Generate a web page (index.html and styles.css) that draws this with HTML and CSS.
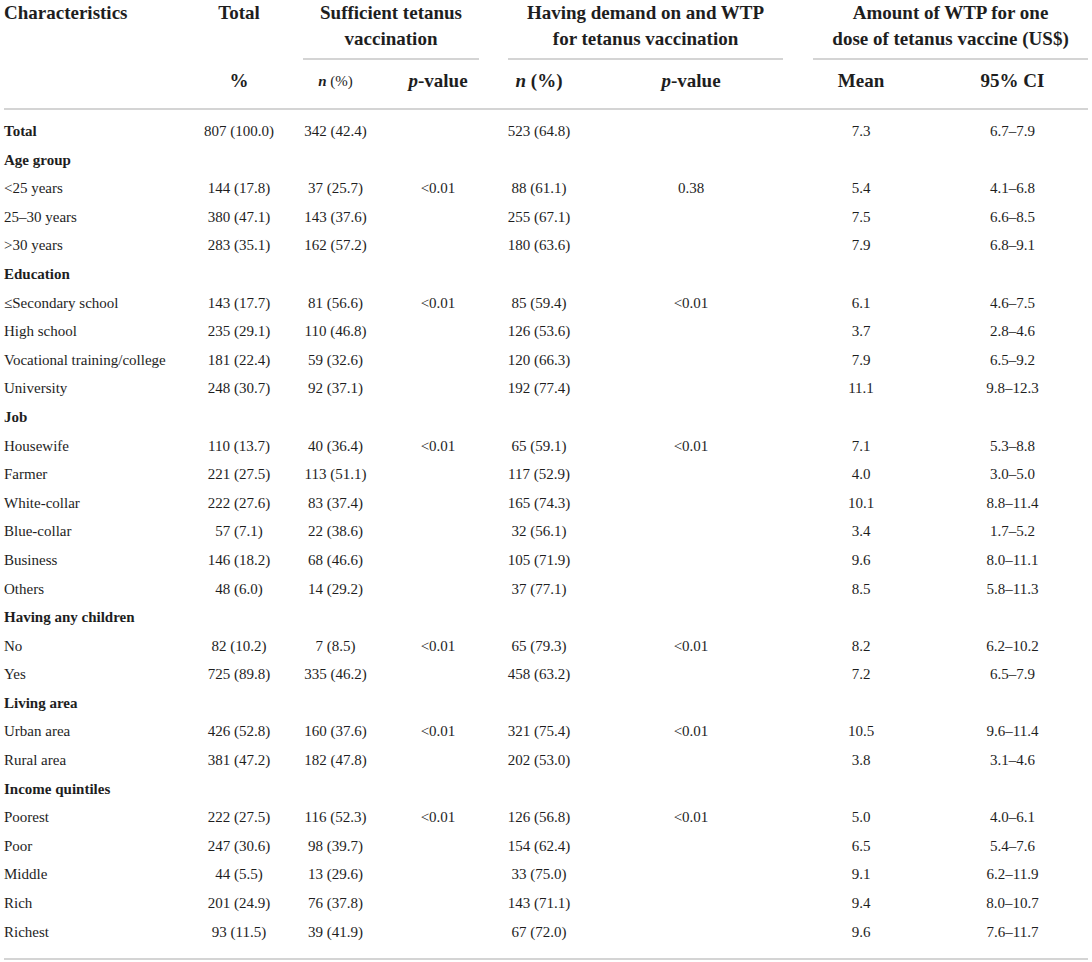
FILE: index.html
```html
<!DOCTYPE html>
<html lang="en">
<head>
  <meta charset="UTF-8" />
  <meta name="viewport" content="width=device-width, initial-scale=1.0"/>
  <title>Tetanus vaccination and WTP</title>
  <link rel="stylesheet" href="styles.css">
</head>
<body>
  <div class="container">
    <table class="wtp-table">
      <colgroup>
        <col class="c-label">
        <col class="c-total">
        <col class="c-n1">
        <col class="c-p1">
        <col class="c-n2">
        <col class="c-p2">
        <col class="c-mean">
        <col class="c-ci">
      </colgroup>
      <thead>
        <tr class="head-top">
          <th class="label">Characteristics</th>
          <th>Total</th>
          <th colspan="2"><div class="group g1">Sufficient tetanus<br>vaccination</div></th>
          <th colspan="2"><div class="group g2">Having demand on and WTP<br>for tetanus vaccination</div></th>
          <th colspan="2"><div class="group g3">Amount of WTP for one<br>dose of tetanus vaccine (US$)</div></th>
        </tr>
        <tr class="head-sub">
          <th class="label"></th>
          <th>%</th>
          <th class="small"><i>n</i> (%)</th>
          <th><i>p</i>-value</th>
          <th><i>n</i> (%)</th>
          <th><i>p</i>-value</th>
          <th>Mean</th>
          <th class="ci">95% CI</th>
        </tr>
      </thead>
      <tbody>
        <tr class="first"><td class="label section">Total</td><td>807 (100.0)</td><td>342 (42.4)</td><td></td><td>523 (64.8)</td><td></td><td>7.3</td><td class="ci">6.7–7.9</td></tr>
        <tr><td class="label section" colspan="8">Age group</td></tr>
        <tr><td class="label">&lt;25 years</td><td>144 (17.8)</td><td>37 (25.7)</td><td>&lt;0.01</td><td>88 (61.1)</td><td>0.38</td><td>5.4</td><td class="ci">4.1–6.8</td></tr>
        <tr><td class="label">25–30 years</td><td>380 (47.1)</td><td>143 (37.6)</td><td></td><td>255 (67.1)</td><td></td><td>7.5</td><td class="ci">6.6–8.5</td></tr>
        <tr><td class="label">&gt;30 years</td><td>283 (35.1)</td><td>162 (57.2)</td><td></td><td>180 (63.6)</td><td></td><td>7.9</td><td class="ci">6.8–9.1</td></tr>
        <tr><td class="label section" colspan="8">Education</td></tr>
        <tr><td class="label">≤Secondary school</td><td>143 (17.7)</td><td>81 (56.6)</td><td>&lt;0.01</td><td>85 (59.4)</td><td>&lt;0.01</td><td>6.1</td><td class="ci">4.6–7.5</td></tr>
        <tr><td class="label">High school</td><td>235 (29.1)</td><td>110 (46.8)</td><td></td><td>126 (53.6)</td><td></td><td>3.7</td><td class="ci">2.8–4.6</td></tr>
        <tr><td class="label">Vocational training/college</td><td>181 (22.4)</td><td>59 (32.6)</td><td></td><td>120 (66.3)</td><td></td><td>7.9</td><td class="ci">6.5–9.2</td></tr>
        <tr><td class="label">University</td><td>248 (30.7)</td><td>92 (37.1)</td><td></td><td>192 (77.4)</td><td></td><td>11.1</td><td class="ci">9.8–12.3</td></tr>
        <tr><td class="label section" colspan="8">Job</td></tr>
        <tr><td class="label">Housewife</td><td>110 (13.7)</td><td>40 (36.4)</td><td>&lt;0.01</td><td>65 (59.1)</td><td>&lt;0.01</td><td>7.1</td><td class="ci">5.3–8.8</td></tr>
        <tr><td class="label">Farmer</td><td>221 (27.5)</td><td>113 (51.1)</td><td></td><td>117 (52.9)</td><td></td><td>4.0</td><td class="ci">3.0–5.0</td></tr>
        <tr><td class="label">White-collar</td><td>222 (27.6)</td><td>83 (37.4)</td><td></td><td>165 (74.3)</td><td></td><td>10.1</td><td class="ci">8.8–11.4</td></tr>
        <tr><td class="label">Blue-collar</td><td>57 (7.1)</td><td>22 (38.6)</td><td></td><td>32 (56.1)</td><td></td><td>3.4</td><td class="ci">1.7–5.2</td></tr>
        <tr><td class="label">Business</td><td>146 (18.2)</td><td>68 (46.6)</td><td></td><td>105 (71.9)</td><td></td><td>9.6</td><td class="ci">8.0–11.1</td></tr>
        <tr><td class="label">Others</td><td>48 (6.0)</td><td>14 (29.2)</td><td></td><td>37 (77.1)</td><td></td><td>8.5</td><td class="ci">5.8–11.3</td></tr>
        <tr><td class="label section" colspan="8">Having any children</td></tr>
        <tr><td class="label">No</td><td>82 (10.2)</td><td>7 (8.5)</td><td>&lt;0.01</td><td>65 (79.3)</td><td>&lt;0.01</td><td>8.2</td><td class="ci">6.2–10.2</td></tr>
        <tr><td class="label">Yes</td><td>725 (89.8)</td><td>335 (46.2)</td><td></td><td>458 (63.2)</td><td></td><td>7.2</td><td class="ci">6.5–7.9</td></tr>
        <tr><td class="label section" colspan="8">Living area</td></tr>
        <tr><td class="label">Urban area</td><td>426 (52.8)</td><td>160 (37.6)</td><td>&lt;0.01</td><td>321 (75.4)</td><td>&lt;0.01</td><td>10.5</td><td class="ci">9.6–11.4</td></tr>
        <tr><td class="label">Rural area</td><td>381 (47.2)</td><td>182 (47.8)</td><td></td><td>202 (53.0)</td><td></td><td>3.8</td><td class="ci">3.1–4.6</td></tr>
        <tr><td class="label section" colspan="8">Income quintiles</td></tr>
        <tr><td class="label">Poorest</td><td>222 (27.5)</td><td>116 (52.3)</td><td>&lt;0.01</td><td>126 (56.8)</td><td>&lt;0.01</td><td>5.0</td><td class="ci">4.0–6.1</td></tr>
        <tr><td class="label">Poor</td><td>247 (30.6)</td><td>98 (39.7)</td><td></td><td>154 (62.4)</td><td></td><td>6.5</td><td class="ci">5.4–7.6</td></tr>
        <tr><td class="label">Middle</td><td>44 (5.5)</td><td>13 (29.6)</td><td></td><td>33 (75.0)</td><td></td><td>9.1</td><td class="ci">6.2–11.9</td></tr>
        <tr><td class="label">Rich</td><td>201 (24.9)</td><td>76 (37.8)</td><td></td><td>143 (71.1)</td><td></td><td>9.4</td><td class="ci">8.0–10.7</td></tr>
        <tr class="last"><td class="label">Richest</td><td>93 (11.5)</td><td>39 (41.9)</td><td></td><td>67 (72.0)</td><td></td><td>9.6</td><td class="ci">7.6–11.7</td></tr>
      </tbody>
    </table>
  </div>
</body>
</html>
```

FILE: styles.css
```css
body {
  font-family: 'Liberation Serif', 'Times New Roman', serif;
  background-color: #fff;
  color: #1e1e1e;
  margin: 0;
  padding: 0;
}

.container {
  padding: 0 4px;
}

.wtp-table {
  width: 1084px;
  table-layout: fixed;
  border-collapse: collapse;
}

.c-label { width: 186px; }
.c-total { width: 98px; }
.c-n1 { width: 95px; }
.c-p1 { width: 110px; }
.c-n2 { width: 92px; }
.c-p2 { width: 212px; }
.c-mean { width: 128px; }
.c-ci { width: 163px; }

th {
  font-size: 19px;
  font-weight: bold;
  line-height: 26px;
  text-align: center;
  padding: 0;
  vertical-align: top;
}

th i { font-style: italic; }

.group {
  padding-bottom: 6px;
  border-bottom: 2px solid #d4d4d4;
  margin: 0 14px 0 15px;
}

.group.g3 { margin: 0 0 0 16px; }

.head-sub th {
  padding: 8px 0 14px;
  border-bottom: 2px solid #d4d4d4;
}

.head-sub th.small {
  font-size: 15px;
  font-weight: normal;
}

.head-sub th.small i { font-weight: bold; }

th.label, td.label {
  text-align: left;
}

td {
  font-size: 15px;
  line-height: 28.6px;
  text-align: center;
  padding: 0;
  white-space: nowrap;
}

th.ci, td.ci { padding-left: 12px; }

td.section { font-weight: bold; }

tr.first td { padding-top: 7px; }

tr.last td {
  padding-bottom: 12px;
  border-bottom: 2px solid #d4d4d4;
}
```
